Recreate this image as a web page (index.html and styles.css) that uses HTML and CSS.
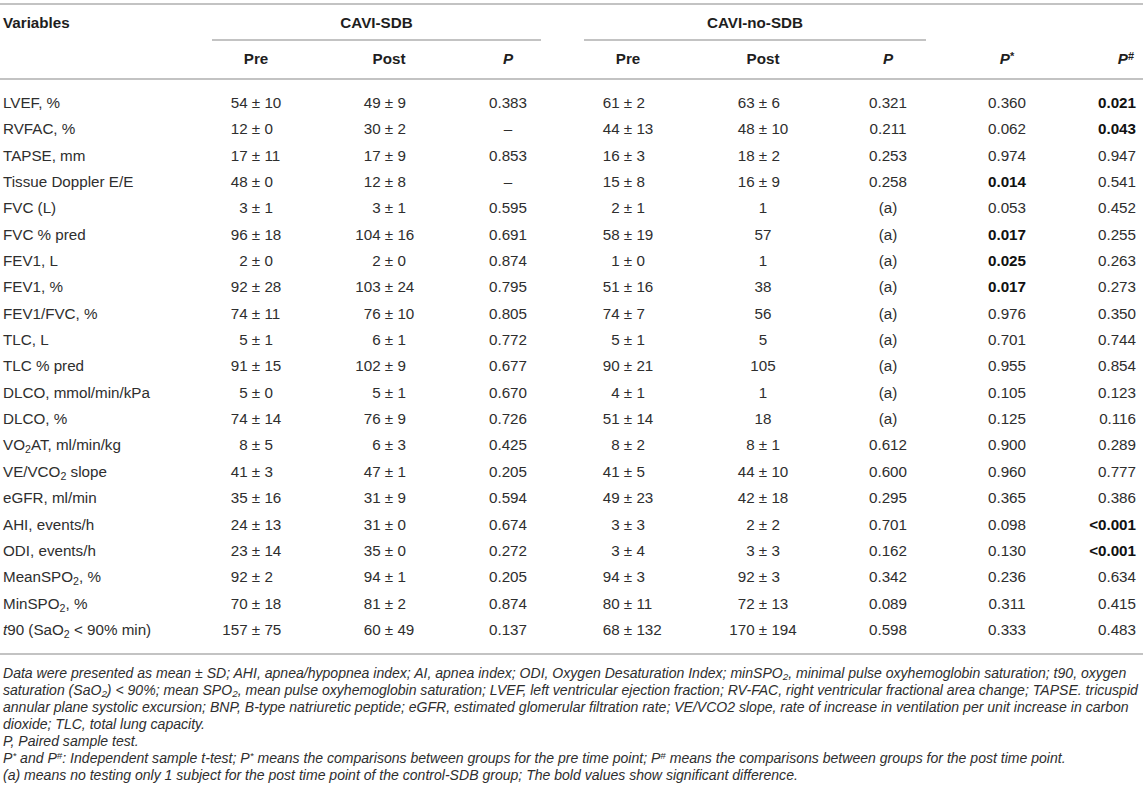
FILE: index.html
```html
<!DOCTYPE html>
<html lang="en">
<head>
<meta charset="utf-8">
<title>Table</title>
<link rel="stylesheet" href="styles.css">
</head>
<body>
<div class="page">
<table class="data">
  <colgroup>
    <col class="c-var"><col class="c-pre1"><col class="c-post1"><col class="c-p1">
    <col class="c-pre2"><col class="c-post2"><col class="c-p2"><col class="c-ps"><col class="c-ph">
  </colgroup>
  <thead>
    <tr class="h1">
      <th class="var">Variables</th>
      <th colspan="3" class="grp grp1"><div class="grp-line">CAVI-SDB</div></th>
      <th colspan="3" class="grp grp2"><div class="grp-line">CAVI-no-SDB</div></th>
      <th></th>
      <th></th>
    </tr>
    <tr class="h2">
      <th></th>
      <th>Pre</th>
      <th>Post</th>
      <th><i>P</i></th>
      <th>Pre</th>
      <th>Post</th>
      <th><i>P</i></th>
      <th><i>P</i><sup>*</sup></th>
      <th class="last"><i>P</i><sup>#</sup></th>
    </tr>
  </thead>
  <tbody>
    <tr><td>LVEF, %</td><td><span class="l">54</span> ± <span class="r">10</span></td><td><span class="l">49</span> ± <span class="r">9</span></td><td>0.383</td><td><span class="l">61</span> ± <span class="r">2</span></td><td><span class="l">63</span> ± <span class="r">6</span></td><td>0.321</td><td>0.360</td><td class="last"><b>0.021</b></td></tr>
    <tr><td>RVFAC, %</td><td><span class="l">12</span> ± <span class="r">0</span></td><td><span class="l">30</span> ± <span class="r">2</span></td><td>–</td><td><span class="l">44</span> ± <span class="r">13</span></td><td><span class="l">48</span> ± <span class="r">10</span></td><td>0.211</td><td>0.062</td><td class="last"><b>0.043</b></td></tr>
    <tr><td>TAPSE, mm</td><td><span class="l">17</span> ± <span class="r">11</span></td><td><span class="l">17</span> ± <span class="r">9</span></td><td>0.853</td><td><span class="l">16</span> ± <span class="r">3</span></td><td><span class="l">18</span> ± <span class="r">2</span></td><td>0.253</td><td>0.974</td><td class="last">0.947</td></tr>
    <tr><td>Tissue Doppler E/E</td><td><span class="l">48</span> ± <span class="r">0</span></td><td><span class="l">12</span> ± <span class="r">8</span></td><td>–</td><td><span class="l">15</span> ± <span class="r">8</span></td><td><span class="l">16</span> ± <span class="r">9</span></td><td>0.258</td><td><b>0.014</b></td><td class="last">0.541</td></tr>
    <tr><td>FVC (L)</td><td><span class="l">3</span> ± <span class="r">1</span></td><td><span class="l">3</span> ± <span class="r">1</span></td><td>0.595</td><td><span class="l">2</span> ± <span class="r">1</span></td><td>1</td><td>(a)</td><td>0.053</td><td class="last">0.452</td></tr>
    <tr><td>FVC % pred</td><td><span class="l">96</span> ± <span class="r">18</span></td><td><span class="l">104</span> ± <span class="r">16</span></td><td>0.691</td><td><span class="l">58</span> ± <span class="r">19</span></td><td>57</td><td>(a)</td><td><b>0.017</b></td><td class="last">0.255</td></tr>
    <tr><td>FEV1, L</td><td><span class="l">2</span> ± <span class="r">0</span></td><td><span class="l">2</span> ± <span class="r">0</span></td><td>0.874</td><td><span class="l">1</span> ± <span class="r">0</span></td><td>1</td><td>(a)</td><td><b>0.025</b></td><td class="last">0.263</td></tr>
    <tr><td>FEV1, %</td><td><span class="l">92</span> ± <span class="r">28</span></td><td><span class="l">103</span> ± <span class="r">24</span></td><td>0.795</td><td><span class="l">51</span> ± <span class="r">16</span></td><td>38</td><td>(a)</td><td><b>0.017</b></td><td class="last">0.273</td></tr>
    <tr><td>FEV1/FVC, %</td><td><span class="l">74</span> ± <span class="r">11</span></td><td><span class="l">76</span> ± <span class="r">10</span></td><td>0.805</td><td><span class="l">74</span> ± <span class="r">7</span></td><td>56</td><td>(a)</td><td>0.976</td><td class="last">0.350</td></tr>
    <tr><td>TLC, L</td><td><span class="l">5</span> ± <span class="r">1</span></td><td><span class="l">6</span> ± <span class="r">1</span></td><td>0.772</td><td><span class="l">5</span> ± <span class="r">1</span></td><td>5</td><td>(a)</td><td>0.701</td><td class="last">0.744</td></tr>
    <tr><td>TLC % pred</td><td><span class="l">91</span> ± <span class="r">15</span></td><td><span class="l">102</span> ± <span class="r">9</span></td><td>0.677</td><td><span class="l">90</span> ± <span class="r">21</span></td><td>105</td><td>(a)</td><td>0.955</td><td class="last">0.854</td></tr>
    <tr><td>DLCO, mmol/min/kPa</td><td><span class="l">5</span> ± <span class="r">0</span></td><td><span class="l">5</span> ± <span class="r">1</span></td><td>0.670</td><td><span class="l">4</span> ± <span class="r">1</span></td><td>1</td><td>(a)</td><td>0.105</td><td class="last">0.123</td></tr>
    <tr><td>DLCO, %</td><td><span class="l">74</span> ± <span class="r">14</span></td><td><span class="l">76</span> ± <span class="r">9</span></td><td>0.726</td><td><span class="l">51</span> ± <span class="r">14</span></td><td>18</td><td>(a)</td><td>0.125</td><td class="last">0.116</td></tr>
    <tr><td>VO<sub>2</sub>AT, ml/min/kg</td><td><span class="l">8</span> ± <span class="r">5</span></td><td><span class="l">6</span> ± <span class="r">3</span></td><td>0.425</td><td><span class="l">8</span> ± <span class="r">2</span></td><td><span class="l">8</span> ± <span class="r">1</span></td><td>0.612</td><td>0.900</td><td class="last">0.289</td></tr>
    <tr><td>VE/VCO<sub>2</sub> slope</td><td><span class="l">41</span> ± <span class="r">3</span></td><td><span class="l">47</span> ± <span class="r">1</span></td><td>0.205</td><td><span class="l">41</span> ± <span class="r">5</span></td><td><span class="l">44</span> ± <span class="r">10</span></td><td>0.600</td><td>0.960</td><td class="last">0.777</td></tr>
    <tr><td>eGFR, ml/min</td><td><span class="l">35</span> ± <span class="r">16</span></td><td><span class="l">31</span> ± <span class="r">9</span></td><td>0.594</td><td><span class="l">49</span> ± <span class="r">23</span></td><td><span class="l">42</span> ± <span class="r">18</span></td><td>0.295</td><td>0.365</td><td class="last">0.386</td></tr>
    <tr><td>AHI, events/h</td><td><span class="l">24</span> ± <span class="r">13</span></td><td><span class="l">31</span> ± <span class="r">0</span></td><td>0.674</td><td><span class="l">3</span> ± <span class="r">3</span></td><td><span class="l">2</span> ± <span class="r">2</span></td><td>0.701</td><td>0.098</td><td class="last"><b>&lt;0.001</b></td></tr>
    <tr><td>ODI, events/h</td><td><span class="l">23</span> ± <span class="r">14</span></td><td><span class="l">35</span> ± <span class="r">0</span></td><td>0.272</td><td><span class="l">3</span> ± <span class="r">4</span></td><td><span class="l">3</span> ± <span class="r">3</span></td><td>0.162</td><td>0.130</td><td class="last"><b>&lt;0.001</b></td></tr>
    <tr><td>MeanSPO<sub>2</sub>, %</td><td><span class="l">92</span> ± <span class="r">2</span></td><td><span class="l">94</span> ± <span class="r">1</span></td><td>0.205</td><td><span class="l">94</span> ± <span class="r">3</span></td><td><span class="l">92</span> ± <span class="r">3</span></td><td>0.342</td><td>0.236</td><td class="last">0.634</td></tr>
    <tr><td>MinSPO<sub>2</sub>, %</td><td><span class="l">70</span> ± <span class="r">18</span></td><td><span class="l">81</span> ± <span class="r">2</span></td><td>0.874</td><td><span class="l">80</span> ± <span class="r">11</span></td><td><span class="l">72</span> ± <span class="r">13</span></td><td>0.089</td><td>0.311</td><td class="last">0.415</td></tr>
    <tr><td><i>t</i>90 (SaO<sub>2</sub> &lt; 90% min)</td><td><span class="l">157</span> ± <span class="r">75</span></td><td><span class="l">60</span> ± <span class="r">49</span></td><td>0.137</td><td><span class="l">68</span> ± <span class="r">132</span></td><td><span class="l">170</span> ± <span class="r">194</span></td><td>0.598</td><td>0.333</td><td class="last">0.483</td></tr>
  </tbody>
</table>
<div class="notes">
  <p>Data were presented as mean ± SD; AHI, apnea/hypopnea index; AI, apnea index; ODI, Oxygen Desaturation Index; minSPO<sub>2</sub>, minimal pulse oxyhemoglobin saturation; t90, oxygen saturation (SaO<sub>2</sub>) &lt; 90%; mean SPO<sub>2</sub>, mean pulse oxyhemoglobin saturation; LVEF, left ventricular ejection fraction; RV-FAC, right ventricular fractional area change; TAPSE. tricuspid annular plane systolic excursion; BNP, B-type natriuretic peptide; eGFR, estimated glomerular filtration rate; VE/VCO2 slope, rate of increase in ventilation per unit increase in carbon dioxide; TLC, total lung capacity.</p>
  <p>P, Paired sample test.</p>
  <p>P<sup>*</sup> and P<sup>#</sup>: Independent sample t-test; P<sup>*</sup> means the comparisons between groups for the pre time point; P<sup>#</sup> means the comparisons between groups for the post time point.</p>
  <p>(a) means no testing only 1 subject for the post time point of the control-SDB group; The bold values show significant difference.</p>
</div>
</div>
</body>
</html>
```
FILE: styles.css
```css
html, body {
  margin: 0;
  padding: 0;
  background: #ffffff;
}
body {
  font-family: "Liberation Sans", Arial, Helvetica, sans-serif;
  color: #2e2e2e;
}
.page {
  padding-top: 3px;
  width: 1143px;
}
.data {
  width: 1143px;
  table-layout: fixed;
  border-collapse: collapse;
  border-top: 2px solid #c3c3c3;
  border-bottom: 2px solid #c3c3c3;
  font-size: 15.2px;
}
.c-var { width: 192px; }
.c-pre1 { width: 128px; }
.c-post1 { width: 138px; }
.c-p1 { width: 100px; }
.c-pre2 { width: 140px; }
.c-post2 { width: 130px; }
.c-p2 { width: 120px; }
.c-ps { width: 118px; }
.c-ph { width: 77px; }

th {
  font-weight: bold;
  color: #1e1e1e;
  text-align: center;
  line-height: 18px;
  padding: 0;
}
.h1 th {
  vertical-align: top;
  padding-top: 9px;
}
.h1 th.var {
  text-align: left;
  padding-left: 3px;
}
.grp-line {
  padding-bottom: 7px;
  border-bottom: 2px solid #c3c3c3;
}
.grp1 { padding-left: 20px; padding-right: 17px; }
.grp2 { padding-left: 26px; padding-right: 22px; }
.h2 th {
  padding-top: 9px;
  padding-bottom: 10px;
  border-bottom: 2px solid #c3c3c3;
}
th sup {
  font-size: 0.72em;
  line-height: 0;
  vertical-align: 0.4em;
}
.data .last {
  text-align: right;
  padding-right: 7px;
}
.data th.last {
  padding-right: 9px;
}
td {
  padding: 0;
  line-height: 26.35px;
  text-align: center;
  white-space: nowrap;
}
td:first-child {
  text-align: left;
  padding-left: 3px;
}
tbody tr:first-child td { padding-top: 10px; }
tbody tr:last-child td { padding-bottom: 10px; }
td b {
  color: #111;
}
td sub, .notes sub {
  font-size: 0.7em;
  line-height: 0;
  vertical-align: -0.25em;
}
.l, .r {
  display: inline-block;
  width: 1.9em;
}
.l { text-align: right; }
.r { text-align: left; }

.notes {
  padding: 10px 2px 0 3px;
  font-style: italic;
  font-size: 14.05px;
  line-height: 17px;
  color: #2e2e2e;
}
.notes p {
  margin: 0;
}
.notes sup {
  font-size: 0.7em;
  line-height: 0;
  vertical-align: 0.45em;
}
```
